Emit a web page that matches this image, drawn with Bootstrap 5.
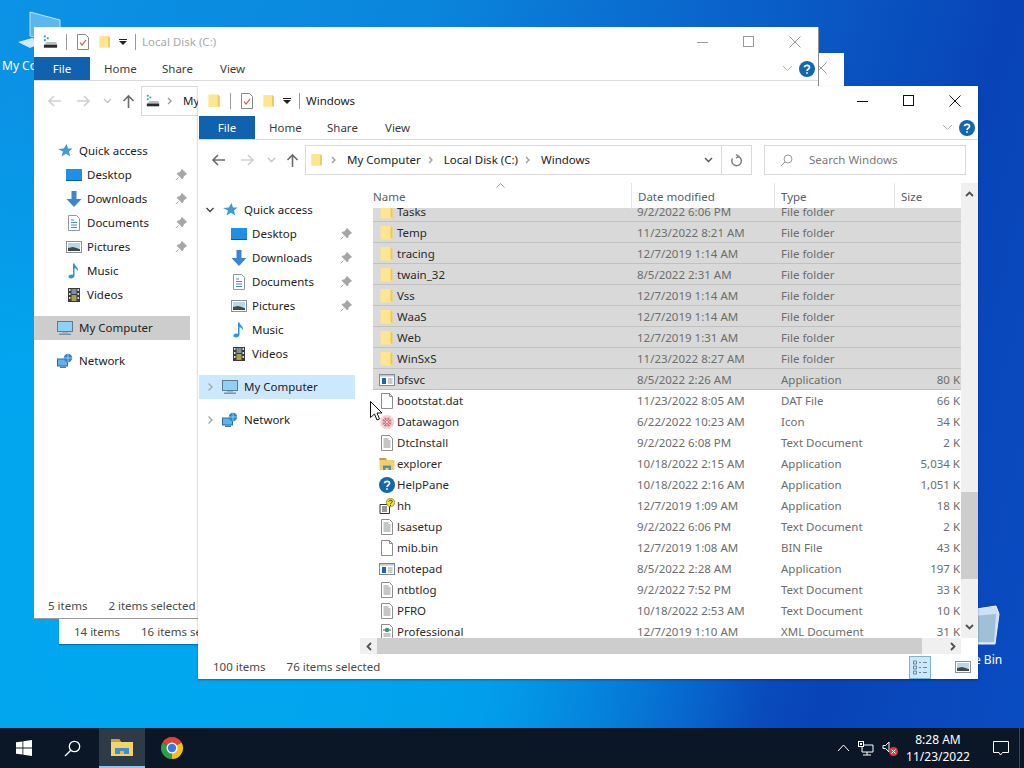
<!DOCTYPE html>
<html>
<head>
<meta charset="utf-8">
<title>File Explorer</title>
<link href="https://cdn.jsdelivr.net/npm/bootstrap@5.3.2/dist/css/bootstrap.min.css" rel="stylesheet">
<style>
  html, body { margin: 0; width: 1024px; height: 768px; overflow: hidden; }
  body { font: 11.5px/1.2 "Noto Sans", "Open Sans", sans-serif; color: #222; background: #0a6cd2; }
  .desk { width: 1024px; height: 768px; background:
      radial-gradient(ellipse 620px 560px at 150px 640px, #00a8f0 0%, rgba(0,168,240,.85) 55%, rgba(0,168,240,0) 100%),
      linear-gradient(105deg, #0b93e6 0%, #0a86dc 35%, #0a5fc8 62%, #0844b8 82%, #0a4cc2 100%); position: relative; overflow: hidden; }
  .dk-item { position: absolute; color: #fff; font-size: 12px; white-space: nowrap; }
  .dk-pc { left: 16px; top: 10px; width: 46px; height: 42px; }
  .dk-pc-t { left: 2px; top: 59px; }
  .dk-bin { left: 968px; top: 604px; width: 32px; height: 42px; }
  .dk-bin-t { left: 939px; top: 653px; }

  .win { position: absolute; background: #fff; display: flex; flex-direction: column; overflow: hidden; }
  .win-c { left: 59px; top: 53px; width: 785px; height: 591px; box-shadow: 0 1px 1px rgba(0,0,40,.3); }
  .win-b { left: 34px; top: 27px; width: 784px; height: 591px; box-shadow: 1px 0 0 #8d8d8d, 0 1px 0 #9a9a9a; }
  .win-a { left: 198px; top: 86px; width: 780px; height: 593px; box-shadow: 0 1px 2px rgba(0,0,40,.35); }

  .title-row { height: 30px; flex: none; padding-left: 9px; }
  .win-b .title-row { color: #a9a9a9; }
  .t-ico { width: 15px; height: 16px; flex: none; }
  .t-sep { width: 1px; height: 16px; background: #9a9a9a; flex: none; }
  .t-s1 { margin: 0 10px 0 8px; }
  .t-check { width: 12px; height: 16px; flex: none; margin-right: 9px; }
  .t-folder { width: 14px; height: 16px; flex: none; margin-right: 7px; }
  .t-drop { width: 8px; height: 8px; flex: none; margin-right: 8px; }
  .t-s2 { margin-right: 6px; }
  .ctl { width: 46px; height: 30px; flex: none; display: flex; align-items: center; justify-content: center; }
  .ctl svg { width: 12px; height: 12px; stroke: #111; fill: none; }
  .win-b .ctl svg, .win-c .ctl svg { stroke: #9a9a9a; }

  .tab-row { height: 24px; flex: none; border-bottom: 1px solid #dadbdc; }
  .tab-file { width: 56px; height: 23px; background: #1062ae; color: #fff; text-align: center; line-height: 23px; }
  .win-a .tab-file { margin-left: 1px; }
  .tab-x { width: 58px; padding-left: 14px; line-height: 23px; color: #3c3c3c; }
  .rb-chev { width: 11px; height: 7px; stroke: #b5b5b5; fill: none; margin-right: 6px; }
  .rb-help { width: 16px; height: 16px; margin-right: 3px; }

  .addr-row { height: 43px; flex: none; padding: 5px 12px 0 4px; align-items: flex-start; }
  .slot { height: 29px; display: flex; align-items: center; justify-content: center; flex: none; }
  .s-32 { width: 32px; } .s-26 { width: 26px; } .s-22 { width: 22px; } .s-20 { width: 20px; }
  .arr { width: 15px; height: 14px; fill: none; stroke: #6c6c6c; stroke-width: 1.6; }
  .arr.off { stroke: #cfcfcf; }
  .arr-dn { width: 9px; height: 6px; fill: none; stroke: #c4c4c4; stroke-width: 1.4; }
  .addr-box { margin-left: 3px; width: 447px; height: 30px; border: 1px solid #d9d9d9; flex: none; padding-left: 4px; color: #222; }
  .crumb-i { width: 14px; height: 16px; flex: none; }
  .sepv { width: 6px; height: 8px; fill: none; stroke: #9a9a9a; stroke-width: 1.3; flex: none; margin: 0 10px 0 7px; }
  .addr-end { width: 30px; height: 28px; border-left: 1px solid #d9d9d9; flex: none; }
  .search-box { margin-left: 12px; width: 202px; height: 30px; border: 1px solid #d9d9d9; padding-left: 15px; color: #7a7a7a; flex: none; }

  .main { flex: 1 1 0; min-height: 0; }
  .tree { width: 162px; flex: none; padding-top: 15px; }
  .win-a .tree { padding-left: 1px; }
  .t-row { width: 156px; height: 24px; display: flex; align-items: center; }
  .t-gap { margin-top: 9px; }
  .t-on-a { background: #cce8ff; }
  .t-on-b { background: #cdcdcd; }
  .t-chev { width: 23px; flex: none; display: flex; justify-content: center; padding-right: 1px; }
  .t-chev svg { width: 10px; height: 10px; fill: none; stroke: #a6a6a6; stroke-width: 1.4; }
  .t-ic { width: 16px; height: 16px; flex: none; margin-right: 6px; }
  .t-child { padding-left: 32px; }
  .t-child .t-ic { margin-right: 5px; }
  .t-pin { width: 12px; height: 12px; margin-left: auto; margin-right: 3px; flex: none; }

  .list-wrap { flex: 1 1 0; min-width: 0; display: flex; flex-direction: column; }
  .list-top { flex: 1 1 0; min-height: 0; display: flex; }
  .list-cols { flex: 1 1 0; min-width: 0; padding-left: 13px; display: flex; flex-direction: column; }
  .col-head, .f-row { display: grid; width: 588px; }
  .col-head { height: 25px; flex: none; grid-template-columns: 258px 143px 120px 67px; color: #56606c; position: relative; }
  .col-head > div { line-height: 25px; padding-top: 1px; }
  .col-head > div + div { border-left: 1px solid #e5e5e5; padding-left: 6px; }
  .col-head > div:first-child { padding-left: 3px; }
  .sort-up { position: absolute; left: 123px; top: 0; width: 9px; height: 5px; fill: none; stroke: #9a9a9a; }
  .f-body { flex: 1 1 0; min-height: 0; overflow: hidden; }
  .f-first { margin-top: -7px; }
  .f-row { height: 21px; grid-template-columns: 264px 144px 120px 60px; align-items: center; color: #6d6d6d; }
  .f-row.sel { background: #d9d9d9; box-shadow: inset 0 -1px 0 #c1c1c1; }
  .f-name { display: flex; align-items: center; padding-left: 6px; color: #2b2b2b; }
  .f-ic { width: 16px; height: 16px; flex: none; margin-right: 2px; }
  .f-size { text-align: right; padding-right: 1px; }

  .vbar { width: 17px; flex: none; background: #f0f0f0; display: flex; flex-direction: column; align-items: center; }
  .bar-ar { width: 9px; height: 6px; fill: none; stroke: #505050; stroke-width: 1.8; flex: none; }
  .vb-track { flex: 1 1 0; width: 100%; padding-top: 295px; }
  .vb-thumb { height: 87px; background: #cdcdcd; }
  .hbar-row { height: 16px; flex: none; margin-bottom: 1px; margin-right: 17px; background: #f0f0f0; }
  .hb-thumb { width: 545px; height: 100%; background: #cdcdcd; }
  .hb-ar { width: 17px; height: 100%; flex: none; display: flex; align-items: center; justify-content: center; }
  .hb-ar svg { width: 6px; height: 9px; fill: none; stroke: #505050; stroke-width: 1.8; }

  .st-row { height: 24px; flex: none; padding-left: 15px; color: #4a4a4a; gap: 21px; }
  .win-b .st-row { padding-left: 14px; }
  .vw-on { width: 22px; height: 23px; background: #cce8ff; border: 1px solid #7ab4d8; margin-left: auto; display: flex; align-items: center; justify-content: center; }
  .vw-off { width: 16px; height: 16px; margin: 0 7px 0 3px; }

  .taskbar { position: absolute; left: 0; right: 0; bottom: 0; height: 40px; background: #0b1726; }
  .tb-slot { height: 40px; display: flex; align-items: center; justify-content: center; flex: none; }
  .tb-start { width: 48px; } .tb-search { width: 48px; margin-right: 3px; }
  .tb-ex { width: 46px; background: #2d3a47; box-shadow: inset 0 -2px 0 #8cc6ee; }
  .tb-ch { width: 54px; }
  .tray { margin-left: auto; color: #fff; font-size: 12px; }
  .clock { width: 78px; text-align: center; line-height: 17px; }
  .tray-end { width: 5px; height: 40px; border-left: 1px solid #3a4654; margin-left: 10px; }
  .cursor { position: absolute; left: 370px; top: 401px; width: 14px; height: 21px; }
</style>
</head>
<body>
<svg width="0" height="0" class="position-absolute">
  <symbol id="folder" viewBox="0 0 16 16"><path d="M1.5 1h10l2 2v11.5h-12z" fill="#fde68f"/><path d="M11.5 1l2 2v11.5l-2-1.500z" fill="#e9c766"/></symbol>
  <symbol id="drive" viewBox="0 0 16 16"><rect x="1" y="1" width="2" height="2" fill="#25a39a"/><rect x="4" y="3" width="2" height="2" fill="#25a39a"/><rect x="1" y="5" width="2" height="2" fill="#25a39a"/><path d="M4 8h10l1 3v3H1v-3z" fill="#bdbdbd"/><rect x="1" y="11" width="14" height="3" fill="#2b2b2b"/></symbol>
  <symbol id="check" viewBox="0 0 12 16"><path d="M.5.500h8l3 3v12H.5z" fill="#fff" stroke="#8a8a8a"/><path d="M3 8.500l2 2.500 4-5" fill="none" stroke="#c8563c" stroke-width="1.200"/></symbol>
  <symbol id="star" viewBox="0 0 16 16"><path d="M9.500 1l1.500 4.500h4.500l-3.500 3 1.200 5-4.200-2.800-4.500 2.800 1.500-5-5-2.500 5.800-.5z" fill="#3c9ad8"/></symbol>
  <symbol id="desktop" viewBox="0 0 16 16"><rect x="0" y="2" width="16" height="12" fill="#1e90e8"/><rect x="0" y="13" width="16" height="1" fill="#0e5a96"/></symbol>
  <symbol id="down" viewBox="0 0 16 16"><path d="M5.500 0h5v8h5l-7.500 8L.5 8h5z" fill="#3b86cc"/></symbol>
  <symbol id="docs" viewBox="0 0 16 16"><path d="M2.500.5h8l3 3v12h-11z" fill="#fff" stroke="#8f9aa5"/><path d="M5 5h3M5 7.500h6M5 10h6M5 12.500h6" stroke="#4a8fc2"/></symbol>
  <symbol id="pics" viewBox="0 0 16 16"><rect x=".5" y="2.500" width="15" height="11" fill="#fff" stroke="#8a9298"/><path d="M2 4h12v5H2z" fill="#bcd6e8"/><path d="M2 9l5-1 7 2v2H2z" fill="#3f4a4f"/></symbol>
  <symbol id="music" viewBox="0 0 16 16"><path d="M7 .5h1.500c.5 3 4.500 4 3.500 8-.5-2-2-3-3.500-3.200V12.500c0 1.800-1.800 3-3.700 3C3.200 15.500 2.200 14.500 2.500 13.300 2.900 11.800 5 11 7 11.700z" fill="#2f95d6"/></symbol>
  <symbol id="video" viewBox="0 0 16 16"><rect x="2" y="1" width="12" height="14" fill="#3a3a3a"/><path d="M3 2h1.500v2H3zM3 6h1.500v2H3zM3 10h1.500v2H3zM11.500 2H13v2h-1.500zM11.500 6H13v2h-1.500zM11.500 10H13v2h-1.500z" fill="#ddd"/><rect x="5.500" y="2" width="5" height="5" fill="#7f8fa0"/><rect x="5.500" y="8" width="5" height="6" fill="#a99c55"/></symbol>
  <symbol id="pc" viewBox="0 0 16 16"><rect x=".5" y="1.500" width="15" height="10" fill="#8fd0f5" stroke="#5b7b92"/><path d="M5 12h6v1.500H5z" fill="#a8b4bd"/><rect x="2" y="13.500" width="12" height="1.500" fill="#7d93a3"/></symbol>
  <symbol id="net" viewBox="0 0 16 16"><rect x=".5" y="6" width="10" height="7" fill="#5fb2ea" stroke="#2f6f9f"/><rect x="3" y="13.500" width="6" height="1.500" fill="#3a7fb0"/><circle cx="11" cy="5" r="4.200" fill="#2f86c8"/><path d="M7 5h8M11 1v8" stroke="#bfe3f8" stroke-width=".7"/></symbol>
  <symbol id="pin" viewBox="0 0 12 12"><path d="M7 .5l4.500 4.500-1.500.7-1.800 2L7.500 10 2 4.500l2.300-.7 2-1.800zM3.500 8.500L.8 11.200" fill="#a5a5a5" stroke="#a5a5a5"/></symbol>
  <symbol id="app" viewBox="0 0 16 16"><rect x=".5" y="2.500" width="15" height="11" fill="#fff" stroke="#7d8c99"/><rect x="1" y="3" width="14" height="1.500" fill="#b8c6d0"/><rect x="3" y="6" width="4" height="6" fill="#1d63b8"/><path d="M9 7h4.500M9 9h4.500M9 11h4.500" stroke="#8a9aa6"/></symbol>
  <symbol id="blank" viewBox="0 0 16 16"><path d="M2.500.5h8l3 3v12h-11z" fill="#fff" stroke="#8d8d8d"/><path d="M10.500.5v3h3" fill="none" stroke="#8d8d8d"/></symbol>
  <symbol id="text" viewBox="0 0 16 16"><path d="M2.500.5h8l3 3v12h-11z" fill="#fff" stroke="#8d8d8d"/><path d="M4.500 4h5M4.500 6h7M4.500 8h7M4.500 10h7M4.500 12h7" stroke="#8d8d8d"/></symbol>
  <symbol id="xml" viewBox="0 0 16 16"><path d="M2.500.5h8l3 3v12h-11z" fill="#fff" stroke="#8d8d8d"/><circle cx="8" cy="6" r="2.200" fill="#2f9a73"/><path d="M4.500 6l1-1M4.500 6l1 1M11.500 6l-1-1M11.500 6l-1 1" stroke="#555"/><path d="M4.500 10h7M4.500 12h7" stroke="#8d8d8d"/></symbol>
  <symbol id="hh" viewBox="0 0 16 16"><path d="M1 6.500h9.500v9H1z" fill="#fff" stroke="#333"/><path d="M3 9h5M3 11h5M3 13h5" stroke="#333"/><circle cx="11.500" cy="4.500" r="4.200" fill="#e8e62e" stroke="#6c6c10" stroke-width=".6"/><path d="M9.800 3.500c.3-1.700 3.500-1.700 3.500 0 0 1.300-1.800 1.200-1.800 2.700M11.500 7v1" fill="none" stroke="#333" stroke-width="1"/></symbol>
  <symbol id="help" viewBox="0 0 16 16"><circle cx="8" cy="8" r="8" fill="#1168ae"/><path d="M5.500 6.200C5.700 3.800 10.500 3.600 10.500 6.200c0 2-2.500 1.800-2.500 3.800M8 11.200v1.600" fill="none" stroke="#fff" stroke-width="1.700"/></symbol>
  <symbol id="explorer" viewBox="0 0 16 16"><path d="M.5 2h6l1.500 2h7.500v10H.5z" fill="#f2cf6d"/><path d="M.5 2h6l1.500 2H.5z" fill="#c99c3c"/><path d="M4 14V9.500h8V14h-2.500v-2h-3v2z" fill="#4f8fbf"/></symbol>
  <symbol id="wagon" viewBox="0 0 16 16"><circle cx="8" cy="8" r="7" fill="#f2c9cc"/><circle cx="8" cy="8" r="4.500" fill="#d8747f"/><circle cx="8" cy="8" r="2" fill="#a83b4a"/><path d="M8 1v14M1 8h14M3 3l10 10M13 3L3 13" stroke="#fff" stroke-width=".6"/></symbol>
  <symbol id="ch-r" viewBox="0 0 10 10"><path d="M3.500 1.500L7 5 3.500 8.500"/></symbol>
  <symbol id="ch-d" viewBox="0 0 10 10"><path d="M1.500 3L5 6.500 8.500 3"/></symbol>
</svg>

<div class="desk">
  <svg class="dk-item dk-pc" viewBox="0 0 46 42"><path d="M14 2l30 8v24l-30-8z" fill="#5cb6ee" stroke="#b9e2fa"/><path d="M2 32l14-4 12 4-14 6z" fill="#cfeafa"/></svg>
  <div class="dk-item dk-pc-t">My Computer</div>
  <svg class="dk-item dk-bin" viewBox="0 0 32 42"><path d="M2 6l26-4 3 8-4 30H6L2 10z" fill="#cfe1ee" stroke="#eaf4fb"/><path d="M6 12l22-2-2 28H9z" fill="#9fc0d6"/></svg>
  <div class="dk-item dk-bin-t">Recycle Bin</div>

  <!-- back window, only its edges show -->
  <div class="win win-c">
    <div class="d-flex justify-content-end">
      <div class="ctl"><svg viewBox="0 0 12 12"><path d="M.5.500l11 11M11.500.500l-11 11"/></svg></div>
    </div>
    <div class="d-flex align-items-center st-row mt-auto"><span>14 items</span><span>16 items selected</span></div>
  </div>

  <div class="win win-b">
    <div class="d-flex align-items-center title-row">
      <svg class="t-ico"><use href="#drive"/></svg><span class="t-sep t-s1"></span>
      <svg class="t-check"><use href="#check"/></svg><svg class="t-folder"><use href="#folder"/></svg>
      <svg class="t-drop" viewBox="0 0 8 8"><path d="M0 1h8v1H0zM0 3h8L4 7z" fill="#222"/></svg><span class="t-sep t-s2"></span>
      <span>Local Disk (C:)</span>
      <div class="ms-auto d-flex">
        <div class="ctl"><svg viewBox="0 0 12 12"><path d="M0 6.500h11"/></svg></div>
        <div class="ctl"><svg viewBox="0 0 12 12"><rect x=".5" y=".5" width="10" height="10"/></svg></div>
        <div class="ctl"><svg viewBox="0 0 12 12"><path d="M.5.500l11 11M11.500.500l-11 11"/></svg></div>
      </div>
    </div>
    <div class="d-flex align-items-center tab-row">
      <div class="tab-file">File</div><div class="tab-x">Home</div><div class="tab-x">Share</div><div class="tab-x">View</div>
      <svg class="rb-chev ms-auto" viewBox="0 0 11 7"><path d="M1 1l4.500 4.500L10 1"/></svg><svg class="rb-help"><use href="#help"/></svg>
    </div>
    <div class="d-flex addr-row">
      <div class="slot s-32"><svg class="arr off" viewBox="0 0 15 14"><path d="M14 7H2M7 2L2 7l5 5"/></svg></div>
      <div class="slot s-26"><svg class="arr off" viewBox="0 0 15 14"><path d="M1 7h12M8 2l5 5-5 5"/></svg></div>
      <div class="slot s-22"><svg class="arr-dn" viewBox="0 0 9 6"><path d="M1 1l3.500 3.500L8 1"/></svg></div>
      <div class="slot s-20"><svg class="arr" viewBox="0 0 15 14"><path d="M7.500 14V2M2.500 7l5-5 5 5"/></svg></div>
      <div class="addr-box d-flex align-items-center">
        <svg class="crumb-i"><use href="#drive"/></svg>
        <svg class="sepv" viewBox="0 0 6 8"><path d="M1 1l3 3-3 3"/></svg><span>My Computer</span>
      </div>
    </div>
    <div class="d-flex main">
      <div class="tree" id="treeB"></div>
    </div>
    <div class="d-flex align-items-center st-row"><span>5 items</span><span>2 items selected</span></div>
  </div>

  <div class="win win-a">
    <div class="d-flex align-items-center title-row">
      <svg class="t-ico"><use href="#folder"/></svg><span class="t-sep t-s1"></span>
      <svg class="t-check"><use href="#check"/></svg><svg class="t-folder"><use href="#folder"/></svg>
      <svg class="t-drop" viewBox="0 0 8 8"><path d="M0 1h8v1H0zM0 3h8L4 7z" fill="#222"/></svg><span class="t-sep t-s2"></span>
      <span>Windows</span>
      <div class="ms-auto d-flex">
        <div class="ctl"><svg viewBox="0 0 12 12"><path d="M0 6.500h11"/></svg></div>
        <div class="ctl"><svg viewBox="0 0 12 12"><rect x=".5" y=".5" width="10" height="10"/></svg></div>
        <div class="ctl"><svg viewBox="0 0 12 12"><path d="M.5.500l11 11M11.500.500l-11 11"/></svg></div>
      </div>
    </div>
    <div class="d-flex align-items-center tab-row">
      <div class="tab-file">File</div><div class="tab-x">Home</div><div class="tab-x">Share</div><div class="tab-x">View</div>
      <svg class="rb-chev ms-auto" viewBox="0 0 11 7"><path d="M1 1l4.500 4.500L10 1"/></svg><svg class="rb-help"><use href="#help"/></svg>
    </div>
    <div class="d-flex addr-row">
      <div class="slot s-32"><svg class="arr" viewBox="0 0 15 14"><path d="M14 7H2M7 2L2 7l5 5"/></svg></div>
      <div class="slot s-26"><svg class="arr off" viewBox="0 0 15 14"><path d="M1 7h12M8 2l5 5-5 5"/></svg></div>
      <div class="slot s-22"><svg class="arr-dn" viewBox="0 0 9 6"><path d="M1 1l3.500 3.500L8 1"/></svg></div>
      <div class="slot s-20"><svg class="arr" viewBox="0 0 15 14"><path d="M7.500 14V2M2.500 7l5-5 5 5"/></svg></div>
      <div class="addr-box d-flex align-items-center">
        <svg class="crumb-i"><use href="#folder"/></svg>
        <svg class="sepv" viewBox="0 0 6 8"><path d="M1 1l3 3-3 3"/></svg><span>My Computer</span>
        <svg class="sepv" viewBox="0 0 6 8"><path d="M1 1l3 3-3 3"/></svg><span>Local Disk (C:)</span>
        <svg class="sepv" viewBox="0 0 6 8"><path d="M1 1l3 3-3 3"/></svg><span>Windows</span>
        <div class="ms-auto d-flex align-items-center">
          <svg class="arr-dn me-2" viewBox="0 0 9 6"><path d="M1 1l3.500 3.500L8 1" stroke="#555"/></svg>
          <div class="addr-end d-flex align-items-center justify-content-center">
            <svg width="13" height="14" viewBox="0 0 13 14" fill="none" stroke="#7a7a7a" stroke-width="1.400"><path d="M6 1.500l2.500 1.800L6 5.200M8 3.300a4.800 4.800 0 1 1-5.500 2"/></svg>
          </div>
        </div>
      </div>
      <div class="search-box d-flex align-items-center gap-3">
        <svg width="13" height="13" viewBox="0 0 13 13" fill="none" stroke="#9a9a9a"><circle cx="8" cy="5" r="4"/><path d="M5 8l-4 4"/></svg>
        <span>Search Windows</span>
      </div>
    </div>
    <div class="d-flex main">
      <div class="tree" id="treeA"></div>
      <div class="list-wrap">
        <div class="list-top">
          <div class="list-cols">
            <div class="col-head">
              <svg class="sort-up" viewBox="0 0 9 5"><path d="M.5 4.500L4.500 .5l4 4"/></svg>
              <div>Name</div><div>Date modified</div><div>Type</div><div>Size</div>
            </div>
            <div class="f-body" id="files"></div>
          </div>
          <div class="vbar">
            <svg class="bar-ar mt-2" viewBox="0 0 9 6"><path d="M1 5l3.500-3.500L8 5"/></svg>
            <div class="vb-track"><div class="vb-thumb"></div></div>
            <svg class="bar-ar mb-2" viewBox="0 0 9 6"><path d="M1 1l3.500 3.500L8 1"/></svg>
          </div>
        </div>
        <div class="d-flex hbar-row">
          <div class="hb-ar"><svg viewBox="0 0 6 9"><path d="M5 1L1.500 4.500 5 8"/></svg></div>
          <div class="hb-thumb"></div>
          <div class="hb-ar ms-auto"><svg viewBox="0 0 6 9"><path d="M1 1l3.500 3.500L1 8"/></svg></div>
        </div>
      </div>
    </div>
    <div class="d-flex align-items-center st-row">
      <span>100 items</span><span>76 items selected</span>
      <div class="vw-on"><svg width="16" height="16" viewBox="0 0 16 16" fill="none" stroke="#6f8296"><path d="M1.500 2h3v3h-3zM1.500 7h3v3h-3zM1.500 12h3v3h-3zM7 3.500h2M11 3.500h4M7 8.500h2M11 8.500h4M7 13.500h2M11 13.500h4"/></svg></div>
      <svg class="vw-off"><use href="#pics"/></svg>
    </div>
  </div>

  <svg class="cursor" viewBox="0 0 14 21"><path d="M.5.500v16l4-3.500 2.500 6 2.500-1-2.500-6h5z" fill="#fff" stroke="#111"/></svg>

  <div class="d-flex align-items-center taskbar">
    <div class="tb-slot tb-start"><svg width="16" height="16" viewBox="0 0 16 16" fill="#fff"><path d="M0 2.300l6.500-.9v6.200H0zM7.300 1.300L16 0v7.600H7.300zM0 8.400h6.500v6.200L0 13.700zM7.300 8.400H16V16l-8.700-1.300z"/></svg></div>
    <div class="tb-slot tb-search"><svg width="17" height="17" viewBox="0 0 17 17" fill="none" stroke="#fff" stroke-width="1.300"><circle cx="10.500" cy="6.500" r="5.200"/><path d="M6.800 10.200L1 16"/></svg></div>
    <div class="tb-slot tb-ex"><svg width="22" height="20" viewBox="0 0 22 20"><path d="M0 1h8l2 3h12v14H0z" fill="#f4d36b"/><path d="M0 1h8l2 3H0z" fill="#c9a03e"/><path d="M4 16v-6h14v6h-5v-3H9v3z" fill="#3f8fca"/><rect x="9" y="13" width="4" height="3" fill="#e6b94a"/></svg></div>
    <div class="tb-slot tb-ch"><svg width="24" height="24" viewBox="0 0 24 24"><path d="M12 12L2.470 6.500A11 11 0 0 1 21.530 6.500z" fill="#db4437"/><path d="M12 12l9.530-5.500A11 11 0 0 1 12 23z" fill="#f4c20d"/><path d="M12 12v11A11 11 0 0 1 2.470 6.500z" fill="#2f9e44"/><circle cx="12" cy="12" r="5.500" fill="#fff"/><circle cx="12" cy="12" r="4.200" fill="#3b78e7"/></svg></div>
    <div class="d-flex align-items-center tray">
      <svg class="me-2" width="13" height="8" viewBox="0 0 13 8" fill="none" stroke="#fff"><path d="M1 7l5.500-6L12 7"/></svg>
      <svg class="me-2" width="16" height="15" viewBox="0 0 16 15" fill="none" stroke="#fff"><path d="M4 4h11v7H4zM9 11v3M5 14h8"/><rect x=".5" y=".5" width="5" height="5" fill="#0b1726"/><path d="M2 2h2v2H2z" fill="#fff" stroke="none"/></svg>
      <svg width="17" height="17" viewBox="0 0 17 17" fill="none" stroke="#fff"><path d="M1 5.500h2.500L7 2v10L3.500 8.500H1z"/><circle cx="11.500" cy="11.500" r="4.500" fill="#d83b3b" stroke="none"/><path d="M9.500 9.500l4 4M13.500 9.500l-4 4" stroke="#fff"/></svg>
      <div class="clock">8:28 AM<br>11/23/2022</div>
      <svg class="ms-3" width="16" height="15" viewBox="0 0 16 15" fill="none" stroke="#fff"><path d="M.5.500h15v11h-6l-2 2.500-1.500-2.500H.5z"/></svg>
      <div class="tray-end"></div>
    </div>
  </div>
</div>

<script>
  // nav tree is the same in both windows, only the selected row colour differs
  const kids = [['desktop','Desktop',1],['down','Downloads',1],['docs','Documents',1],['pics','Pictures',1],['music','Music'],['video','Videos']];
  function tree(onClass, chev) {
    const ch = d => `<span class="t-chev">${chev ? `<svg><use href="#ch-${d}"/></svg>` : ''}</span>`;
    const ic = n => `<svg class="t-ic"><use href="#${n}"/></svg>`;
    let html = `<div class="t-row">${chev ? `<span class="t-chev"><svg style="stroke:#444"><use href="#ch-d"/></svg></span>` : ch('d')}${ic('star')}<span>Quick access</span></div>`;
    kids.forEach(k => {
      html += `<div class="t-row t-child">${ic(k[0])}<span>${k[1]}</span>${k[2] ? '<svg class="t-pin"><use href="#pin"/></svg>' : ''}</div>`;
    });
    html += `<div class="t-row t-gap ${onClass}">${ch('r')}${ic('pc')}<span>My Computer</span></div>`;
    html += `<div class="t-row t-gap">${ch('r')}${ic('net')}<span>Network</span></div>`;
    return html;
  }
  document.getElementById('treeA').innerHTML = tree('t-on-a', true);
  document.getElementById('treeB').innerHTML = tree('t-on-b', false);

  const files = [
    ['folder','Tasks','9/2/2022 6:06 PM','File folder','',1],
    ['folder','Temp','11/23/2022 8:21 AM','File folder','',1],
    ['folder','tracing','12/7/2019 1:14 AM','File folder','',1],
    ['folder','twain_32','8/5/2022 2:31 AM','File folder','',1],
    ['folder','Vss','12/7/2019 1:14 AM','File folder','',1],
    ['folder','WaaS','12/7/2019 1:14 AM','File folder','',1],
    ['folder','Web','12/7/2019 1:31 AM','File folder','',1],
    ['folder','WinSxS','11/23/2022 8:27 AM','File folder','',1],
    ['app','bfsvc','8/5/2022 2:26 AM','Application','80 K',1],
    ['blank','bootstat.dat','11/23/2022 8:05 AM','DAT File','66 K'],
    ['wagon','Datawagon','6/22/2022 10:23 AM','Icon','34 K'],
    ['text','DtcInstall','9/2/2022 6:08 PM','Text Document','2 K'],
    ['explorer','explorer','10/18/2022 2:15 AM','Application','5,034 K'],
    ['help','HelpPane','10/18/2022 2:16 AM','Application','1,051 K'],
    ['hh','hh','12/7/2019 1:09 AM','Application','18 K'],
    ['text','lsasetup','9/2/2022 6:06 PM','Text Document','2 K'],
    ['blank','mib.bin','12/7/2019 1:08 AM','BIN File','43 K'],
    ['app','notepad','8/5/2022 2:28 AM','Application','197 K'],
    ['text','ntbtlog','9/2/2022 7:52 PM','Text Document','33 K'],
    ['text','PFRO','10/18/2022 2:53 AM','Text Document','10 K'],
    ['xml','Professional','12/7/2019 1:10 AM','XML Document','31 K'],
  ];
  document.getElementById('files').innerHTML = files.map((f, i) => `
    <div class="f-row ${f[5] ? 'sel' : ''} ${i === 0 ? 'f-first' : ''}">
      <div class="f-name"><svg class="f-ic"><use href="#${f[0]}"/></svg><span>${f[1]}</span></div>
      <div>${f[2]}</div><div>${f[3]}</div><div class="f-size">${f[4]}</div>
    </div>`).join('');
</script>
<script src="https://cdn.jsdelivr.net/npm/bootstrap@5.3.2/dist/js/bootstrap.bundle.min.js"></script>
</body>
</html>
